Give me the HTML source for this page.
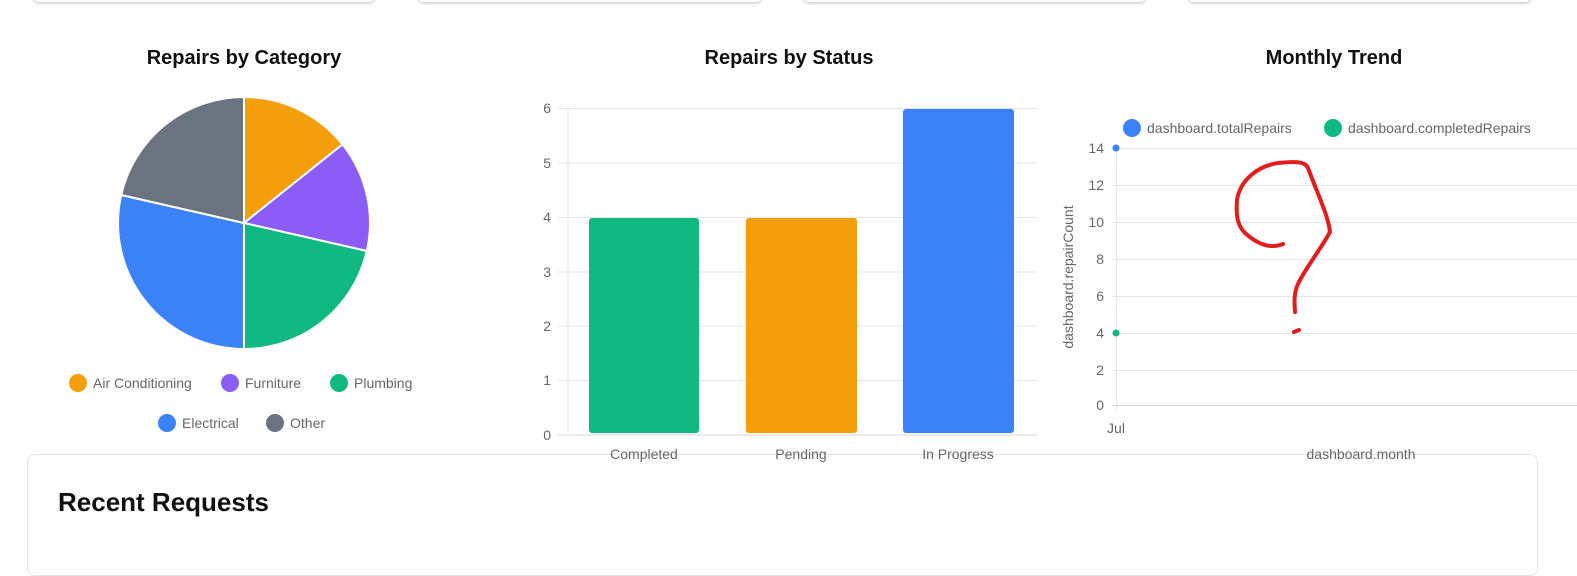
<!DOCTYPE html>
<html><head><style>
html,body{margin:0;padding:0;width:1577px;height:541px;overflow:hidden;background:#fff;font-family:"Liberation Sans",Arial,sans-serif}
.card{position:absolute;top:-10px;height:12px;background:#fff;border-radius:6px;box-shadow:0 1px 3px rgba(0,0,0,.25)}
.t{position:absolute;font-weight:bold;font-size:20px;color:#111;text-align:center;width:400px}
.rr{position:absolute;left:27px;top:454px;width:1509px;height:120px;border:1px solid #e3e3e3;border-radius:8px;background:#fff}
.rr h2{margin:0;position:absolute;left:30px;top:32px;font-size:26px;font-weight:bold;color:#111}
svg{z-index:2}
</style></head><body>
<div class="card" style="left:33px;width:342px"></div>
<div class="card" style="left:418px;width:344px"></div>
<div class="card" style="left:803px;width:343px"></div>
<div class="card" style="left:1188px;width:343px"></div>
<div class="rr"><h2>Recent Requests</h2></div>
<div class="t" style="left:44px;top:47px">Repairs by Category</div>
<div class="t" style="left:589px;top:47px">Repairs by Status</div>
<div class="t" style="left:1134px;top:47px">Monthly Trend</div>
<svg width="1577" height="541" style="position:absolute;left:0;top:0" font-family="Liberation Sans, Arial, sans-serif">
<g stroke="#fff" stroke-width="2">
<path d="M244 223 L244 97 A126 126 0 0 1 342.5 144.4 Z" fill="#f59e0b"/>
<path d="M244 223 L342.5 144.4 A126 126 0 0 1 366.8 251 Z" fill="#8b5cf6"/>
<path d="M244 223 L366.8 251 A126 126 0 0 1 244 349 Z" fill="#10b981"/>
<path d="M244 223 L244 349 A126 126 0 0 1 121.2 195 Z" fill="#3b82f6"/>
<path d="M244 223 L121.2 195 A126 126 0 0 1 244 97 Z" fill="#6b7280"/>
</g>
<g font-size="14" fill="#666">
<circle cx="78" cy="383" r="9" fill="#f59e0b"/><text x="93" y="388">Air Conditioning</text>
<circle cx="230" cy="383" r="9" fill="#8b5cf6"/><text x="245" y="388">Furniture</text>
<circle cx="339" cy="383" r="9" fill="#10b981"/><text x="354" y="388">Plumbing</text>
<circle cx="167" cy="423" r="9" fill="#3b82f6"/><text x="182" y="428">Electrical</text>
<circle cx="275" cy="423" r="9" fill="#6b7280"/><text x="290" y="428">Other</text>
</g>
<g stroke="#e5e5e5" stroke-width="1">
<line x1="558" y1="108.5" x2="1037" y2="108.5"/><line x1="558" y1="163" x2="1037" y2="163"/>
<line x1="558" y1="217.5" x2="1037" y2="217.5"/><line x1="558" y1="272" x2="1037" y2="272"/>
<line x1="558" y1="326" x2="1037" y2="326"/><line x1="558" y1="380.5" x2="1037" y2="380.5"/>
<line x1="558" y1="435" x2="1037" y2="435" stroke="#d5d5d5"/>
<line x1="568" y1="108" x2="568" y2="435"/>
</g>
<g font-size="14" fill="#666" text-anchor="end">
<text x="551" y="113">6</text><text x="551" y="168">5</text><text x="551" y="222">4</text><text x="551" y="277">3</text><text x="551" y="331">2</text><text x="551" y="385">1</text><text x="551" y="440">0</text>
</g>
<rect x="589" y="218" width="110" height="215" rx="3" fill="#10b981"/>
<rect x="746" y="218" width="111" height="215" rx="3" fill="#f59e0b"/>
<rect x="903" y="109" width="111" height="324" rx="3" fill="#3b82f6"/>
<g font-size="14" fill="#666" text-anchor="middle">
<text x="644" y="459">Completed</text><text x="801" y="459">Pending</text><text x="958" y="459">In Progress</text>
</g>
<circle cx="1132" cy="128" r="9" fill="#3b82f6"/><text x="1147" y="133" font-size="14" fill="#666">dashboard.totalRepairs</text>
<circle cx="1333" cy="128" r="9" fill="#10b981"/><text x="1348" y="133" font-size="14" fill="#666">dashboard.completedRepairs</text>
<g stroke="#e5e5e5">
<line x1="1112" y1="148.5" x2="1577" y2="148.5"/><line x1="1112" y1="185.5" x2="1577" y2="185.5"/>
<line x1="1112" y1="222.5" x2="1577" y2="222.5"/><line x1="1112" y1="259.5" x2="1577" y2="259.5"/>
<line x1="1112" y1="296.5" x2="1577" y2="296.5"/><line x1="1112" y1="333.5" x2="1577" y2="333.5"/>
<line x1="1112" y1="370.5" x2="1577" y2="370.5"/><line x1="1112" y1="405.5" x2="1577" y2="405.5" stroke="#d5d5d5"/>
<line x1="1116.5" y1="148" x2="1116.5" y2="410"/>
</g>
<g font-size="14" fill="#666" text-anchor="end">
<text x="1104" y="153">14</text><text x="1104" y="190">12</text><text x="1104" y="227">10</text><text x="1104" y="264">8</text><text x="1104" y="301">6</text><text x="1104" y="338">4</text><text x="1104" y="375">2</text><text x="1104" y="410">0</text>
</g>
<circle cx="1116" cy="148" r="3.5" fill="#3b82f6"/>
<circle cx="1116" cy="333" r="3.5" fill="#10b981"/>
<text x="1116" y="433" font-size="14" fill="#666" text-anchor="middle">Jul</text>
<text x="1361" y="459" font-size="14" fill="#666" text-anchor="middle">dashboard.month</text>
<text transform="translate(1073 277) rotate(-90)" font-size="14" fill="#666" text-anchor="middle">dashboard.repairCount</text>
<path d="M1295 312 C1294 300 1294 290 1300 280 C1308 265 1320 250 1330 232 C1328 215 1318 195 1308 168 C1305 160 1290 162 1278 163 C1258 166 1240 180 1237 200 C1236 215 1237 225 1245 233 C1255 242 1268 250 1283 244" fill="none" stroke="#e11d1d" stroke-width="4" stroke-linecap="round"/>
<path d="M1294 332 L1299 330" stroke="#e11d1d" stroke-width="4" stroke-linecap="round"/>
</svg>
</body></html>
